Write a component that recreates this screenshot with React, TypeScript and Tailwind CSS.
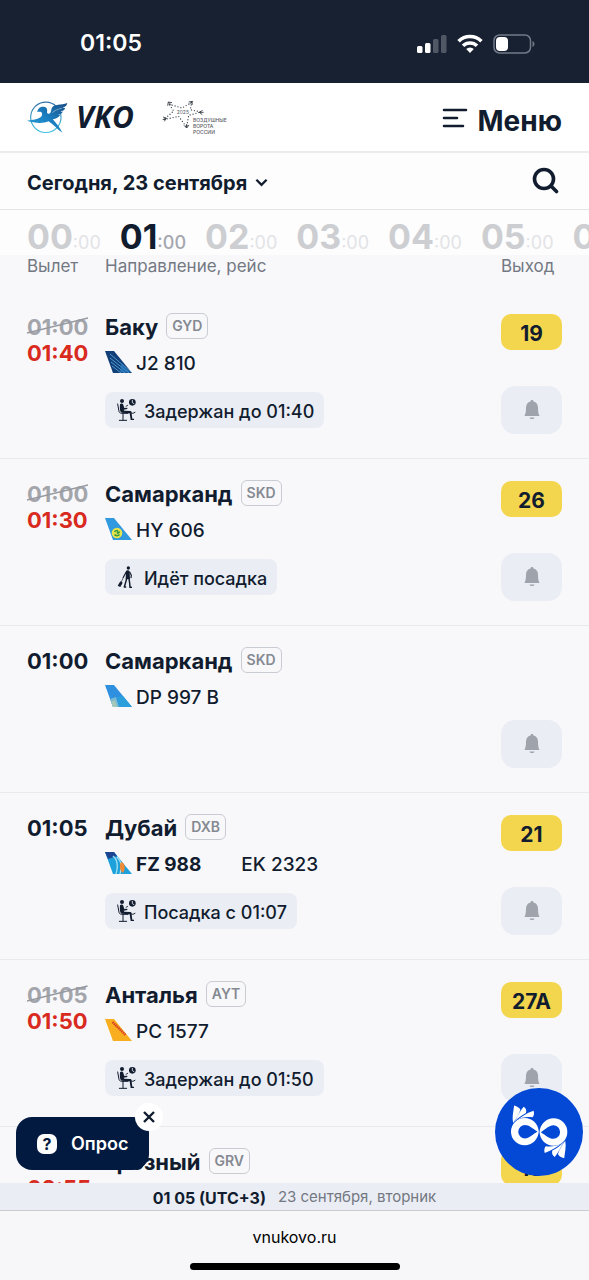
import * as React from "react"

interface Flight {
  id: number;
  time: string;
  newTime?: string;
  city: string;
  code: string;
  airline: string;
  flight: string;
  shared?: string;
  status?: string;
  boarding?: boolean;
  gate?: string;
}

const flights: Flight[] = [
  { id: 1, time: "01:00", newTime: "01:40", city: "Баку", code: "GYD", airline: "J2", flight: "J2 810", status: "Задержан до 01:40", gate: "19" },
  { id: 2, time: "01:00", newTime: "01:30", city: "Самарканд", code: "SKD", airline: "HY", flight: "HY 606", status: "Идёт посадка", boarding: true, gate: "26" },
  { id: 3, time: "01:00", city: "Самарканд", code: "SKD", airline: "DP", flight: "DP 997 B" },
  { id: 4, time: "01:05", city: "Дубай", code: "DXB", airline: "FZ", flight: "FZ 988", shared: "EK 2323", status: "Посадка с 01:07", gate: "21" },
  { id: 5, time: "01:05", newTime: "01:50", city: "Анталья", code: "AYT", airline: "PC", flight: "PC 1577", status: "Задержан до 01:50", gate: "27A" },
  { id: 6, time: "01:20", newTime: "02:55", city: "Грозный", code: "GRV", airline: "DP", flight: "DP 991", gate: "15" },
];

const hours = ["00", "01", "02", "03", "04", "05", "06"];

const StatusBar = () => (
  <div className="flex h-[83px] shrink-0 items-center justify-between bg-[#172132] pt-1 pr-[54px] pl-20 text-white">
    <span className="text-[23px] font-semibold">01:05</span>
    <div className="flex items-center gap-2.5">
      <svg width="30" height="20" viewBox="0 0 30 20" fill="currentColor">
        <rect x="0" y="12" width="5.5" height="7" rx="1.5" />
        <rect x="8" y="9" width="5.5" height="10" rx="1.5" />
        <rect x="16" y="5" width="5.5" height="14" rx="1.5" opacity="0.25" />
        <rect x="24" y="1" width="5.5" height="18" rx="1.5" opacity="0.25" />
      </svg>
      <svg width="26" height="19" viewBox="0 0 26 19" fill="none" stroke="currentColor" strokeWidth="3.6">
        <path d="M1.6 7.2a16.2 16.2 0 0 1 22.8 0" />
        <path d="M6 11.8a10 10 0 0 1 14 0" />
        <path d="M13 19l-3.8-3.9a5.4 5.4 0 0 1 7.6 0z" fill="currentColor" stroke="none" />
      </svg>
      <svg width="42" height="20" viewBox="0 0 42 20" fill="none">
        <rect x="1" y="1" width="36.5" height="18" rx="5.5" stroke="#717a87" strokeWidth="1.5" />
        <rect x="3" y="3" width="12" height="14" rx="4" fill="#fff" />
        <path d="M39.5 7v6c2.6-.8 2.6-5.2 0-6z" fill="#717a87" />
      </svg>
    </div>
  </div>
);

const BirdLogo = () => (
  <svg width="41" height="38" viewBox="0 0 124 114">
    <defs>
      <linearGradient id="ring" x1="0" y1="0" x2="0" y2="1">
        <stop offset="0" stopColor="#3571a8" />
        <stop offset="1" stopColor="#3fc4e0" />
      </linearGradient>
      <linearGradient id="bird" x1="1" y1="0" x2="0" y2="1">
        <stop offset="0" stopColor="#1b4e86" />
        <stop offset="0.5" stopColor="#1a7fc1" />
        <stop offset="1" stopColor="#2aa6dc" />
      </linearGradient>
    </defs>
    <circle cx="57" cy="58" r="46" fill="none" stroke="url(#ring)" strokeWidth="3.5" />
    <path
      d="M31 42c1-10 9-17 18-16 9 0 13 6 12 12-1 6 0 10 6 9 8-2 4-13 10-20C82 19 103 22 122 15c-2 9-7 12-14 14 3 1 5 1 8 0-3 8-8 10-15 11 3 1 5 1 8 0-4 8-9 9-15 10 3 1 4 1 7 0-5 9-12 11-23 14 9 11 20 22 29 41-15-11-28-26-42-35-19 8-43 5-65-2 18-2 32-4 42-11 5-4 5-11 1-15-4-2-8-1-12 0z"
      fill="url(#bird)"
    />
    <path d="M76 44c8-7 18-11 30-14" stroke="#fff" strokeWidth="1.2" fill="none" />
  </svg>
);

const StarLogo = () => (
  <svg width="43" height="32" viewBox="0 0 129 96">
    <path
      d="M22 13l38 11 29-17-4 22 32 7-37 10-6 36-24-33-45 10 30-26z"
      fill="none"
      stroke="#3b4048"
      strokeWidth="4"
      strokeLinecap="round"
      strokeDasharray="0 9"
    />
    <g stroke="#2a3039" strokeWidth="2.5" fill="none">
      <path d="M17 17l2-11 11 2M19 6l9 9M80 6l11-2-1 11M91 4l-9 9M122 31l-10 6 9 7M112 37h13M66 76l8 8 7-9M74 84V72M3 51l10 4-6 9M13 55L2 59" />
    </g>
    <text x="44" y="42" fontSize="15" fill="#555a63">2025</text>
  </svg>
);

const Header = () => (
  <header className="flex h-[70px] shrink-0 items-center border-b-2 border-[#ececee] bg-white px-[27px]">
    <a href="#home" className="flex items-center gap-2">
      <BirdLogo />
      <span className="font-['Open_Sans'] text-[30px] leading-8 font-bold italic">VKO</span>
    </a>
    <a href="#gates" className="ml-7 flex items-start text-[#5c6068]">
      <StarLogo />
      <span className="-ml-3 pt-[17px] text-[5px] leading-[6px] font-medium">
        ВОЗДУШНЫЕ
        <br />
        ВОРОТА
        <br />
        РОССИИ
      </span>
    </a>
    <button className="ml-auto flex items-start gap-2.5 pt-1">
      <svg width="26" height="20" viewBox="0 0 26 20" className="mt-[5px]" stroke="currentColor" strokeWidth="2.6" strokeLinecap="round">
        <path d="M2 2h22M2 10h13M2 18h19" />
      </svg>
      <span className="pt-1 text-[28px] leading-7 font-bold">Меню</span>
    </button>
  </header>
);

const DateBar = () => (
  <div className="flex h-[57px] shrink-0 items-center justify-between border-b border-[#e3e4e7] bg-[#fdfdfe] pr-[30px] pb-0.5 pl-[27px]">
    <button className="flex items-center gap-2 pt-1">
      <span className="pt-0.5 text-[20px] font-bold">Сегодня, 23 сентября</span>
      <svg width="13" height="9" viewBox="0 0 14 9" fill="none" stroke="currentColor" strokeWidth="2.5">
        <path d="M1.5 1.5L7 7l5.5-5.5" />
      </svg>
    </button>
    <button aria-label="Поиск">
      <svg width="27" height="27" viewBox="0 0 27 27" fill="none" stroke="currentColor" strokeWidth="3.6" strokeLinecap="round">
        <circle cx="12" cy="12" r="9.5" />
        <path d="M19 19l5.5 5.5" />
      </svg>
    </button>
  </div>
);

const HourStrip = () => (
  <div className="flex h-[45px] shrink-0 items-end gap-[19px] overflow-x-clip bg-[#fdfdfe] pl-[27px]">
    {hours.map((hour) => (
      <button key={hour} className="flex shrink-0 items-baseline leading-6">
        <span className={hour === "01" ? "text-[34px] font-bold text-[#111c2e]" : "text-[34px] font-bold text-[#cdced1]"}>
          {hour}
        </span>
        <span className={hour === "01" ? "text-[18px] font-medium text-[#a4a7ad]" : "text-[18px] text-[#e2e3e6]"}>:00</span>
      </button>
    ))}
  </div>
);

const TailIcon = ({ airline }: { airline: string }) => {
  const shape = "M0 0h9l18 22H8z";
  return (
    <svg width="27" height="22" viewBox="0 0 27 22">
      {airline === "J2" && (
        <>
          <path d={shape} fill="#123f78" />
          <path d="M5 3l21 18M5 7l19 15M6 11l14 11M7 15l9 7" stroke="#5fb2e6" strokeWidth="0.8" />
          <path d="M16 12l9 9.5h-10z" fill="#2f87cf" opacity="0.6" />
        </>
      )}
      {airline === "HY" && (
        <>
          <path d={shape} fill="#3199de" />
          <circle cx="12" cy="15" r="5.3" fill="#e8e44b" />
          <path d="M9.5 14c1-2 4-2 3 0s2 1 2-.5M9.5 16.5c1 1.5 4 1.5 5 0" stroke="#3c9a3f" strokeWidth="1.5" fill="none" />
        </>
      )}
      {airline === "DP" && (
        <>
          <path d={shape} fill="#2f90e0" />
          <path d="M12 12l6-1 9 11H14z" fill="#2a9fdc" />
          <path d="M5 14l6-2 3 10H8z" fill="#79b9d4" />
          <path d="M6 17l4-2 2 7H8z" fill="#a5c8b8" />
        </>
      )}
      {airline === "FZ" && (
        <>
          <path d={shape} fill="#1ea0da" />
          <path d="M0 0h9l3 4-9 3z" fill="#1b4590" />
          <path d="M8 4c5 4 5 11 3 18M12 5c5 5 5 9 3 17" stroke="#a4e0f2" strokeWidth="1.3" fill="none" />
          <path d="M16 10c4 1 5 6 2 11-3-2-4-7-2-11z" fill="#f08a34" />
        </>
      )}
      {airline === "PC" && (
        <>
          <path d={shape} fill="#f8ae1e" />
          <path d="M7.5 3l13 13" stroke="#d9412a" strokeWidth="2.4" strokeDasharray="1.5 .6" />
        </>
      )}
    </svg>
  );
};

const WaitingIcon = () => (
  <svg width="19" height="22" viewBox="0 0 57 66" fill="none" stroke="currentColor" strokeLinecap="round" strokeLinejoin="round">
    <circle cx="15" cy="6" r="6" fill="currentColor" stroke="none" />
    <path d="M9 16c4-4 9-2 10 2l3 9 9-1v4l-11 2 2 3 18 1c4 1 4 4 4 8l2 15h5v4H41l-3-20-24-2c-5-1-6-10-5-25z" fill="currentColor" stroke="none" />
    <path d="M39 40c5 4 10 4 15 0M2 15l4 22c1 4 3 5 7 6h20M18 44v19M7 64h22" strokeWidth="3" />
    <path d="M27 22l5-3" strokeWidth="2.5" />
    <circle cx="46" cy="10" r="10" fill="currentColor" stroke="none" />
    <path d="M46 4v7l5 3" stroke="#eaedf4" strokeWidth="2.5" />
  </svg>
);

const BoardingIcon = () => (
  <svg width="19" height="22" viewBox="4 0 57 66" fill="none" stroke="currentColor" strokeLinecap="round" strokeLinejoin="round">
    <circle cx="38" cy="6" r="5" fill="currentColor" stroke="none" />
    <path d="M31 15c4-4 10-2 11 3l1 21-13 1z" fill="currentColor" stroke="none" />
    <path d="M33 38l-3 11-4 14h4M40 38l2 13 1 13h4" strokeWidth="4.5" />
    <path d="M32 17l-9 17M42 18l5 10-1 7" strokeWidth="3.5" />
    <path d="M23 34l-6 14" strokeWidth="2" />
    <path d="M14 46l7 4-7 13-8-4z" fill="currentColor" stroke="none" />
  </svg>
);

const BellIcon = () => (
  <svg width="16" height="20" viewBox="0 0 16 20" fill="#9ea3ac">
    <path d="M8 0c1 0 1.500.7 1.500 1.500C12.500 2.200 14 4.500 14 7.500c0 4 .3 6 1.500 8.500H.5C1.700 13.500 2 11.500 2 7.500c0-3 1.500-5.300 4.500-6C6.500.7 7 0 8 0z" />
    <path d="M5.500 17.500h5c-.5 2-4.500 2-5 0z" />
  </svg>
);

const Time = ({ flight }: { flight: Flight }) => (
  <div className="text-[22px] leading-[26px] font-bold">
    {flight.newTime ? (
      <>
        <s className="relative block w-fit text-[#a3a5ab] no-underline">
          {flight.time}
          <svg className="absolute inset-0 h-full w-full" viewBox="0 0 62 26" preserveAspectRatio="none" stroke="#96999f" strokeWidth="1.5">
            <path d="M0 19L62 4" />
          </svg>
        </s>
        <span className="block text-[#d92a20]">{flight.newTime}</span>
      </>
    ) : (
      flight.time
    )}
  </div>
);

const FlightTable = ({ data }: { data: Flight[] }) => (
  <table className="w-full table-fixed border-separate border-spacing-0 text-left">
    <thead>
      <tr className="h-[37px] align-top text-[17px] leading-[22px] text-[#737882]">
        <th className="w-[105px] pl-[27px] font-normal">Вылет</th>
        <th className="font-normal">Направление, рейс</th>
        <th className="w-[88px] font-normal">Выход</th>
      </tr>
    </thead>
    <tbody>
      {data.map((row) => (
        <tr key={row.id} className="h-[167px] align-top">
          <td className="border-b border-[#e8eaee] pt-[22px] pl-[27px]">
            <Time flight={row} />
          </td>
          <td className="border-b border-[#e8eaee] pt-[19px]">
            <div className="flex items-center gap-2">
              <span className="pt-0.5 text-[22px] leading-7 font-bold">{row.city}</span>
              <span className="rounded-md border border-[#c9ccd2] px-[5px] text-[14px] leading-6 font-semibold text-[#858991]">{row.code}</span>
            </div>
            <div className="mt-2 flex h-[26px] items-center gap-1 text-[19px]">
              <TailIcon airline={row.airline} />
              <span className={row.shared ? "pt-1 font-bold" : "pt-1 font-medium"}>{row.flight}</span>
              {row.shared && <span className="pt-1 pl-9 font-medium">{row.shared}</span>}
            </div>
            {row.status && (
              <div className="mt-[17px] flex h-9 w-fit items-center gap-2 rounded-lg bg-[#eaedf4] pr-2.5 pl-3">
                {row.boarding ? <BoardingIcon /> : <WaitingIcon />}
                <span className="pt-0.5 text-[18px] font-medium">{row.status}</span>
              </div>
            )}
          </td>
          <td className="border-b border-[#e8eaee] pt-[22px] pr-[27px]">
            <div className="flex flex-col gap-9">
              <div className={row.gate ? "flex h-9 items-center justify-center rounded-[10px] bg-[#f3d64e] pt-1 text-[21px] font-bold" : "h-9"}>
                {row.gate}
              </div>
              <button aria-label="Уведомить" className="flex h-12 items-center justify-center rounded-[14px] bg-[#eaedf4]">
                <BellIcon />
              </button>
            </div>
          </td>
        </tr>
      ))}
    </tbody>
  </table>
);

const Survey = () => (
  <div className="absolute bottom-[13px] left-4">
    <button className="flex h-[53px] items-center gap-3.5 rounded-[16px] bg-[#021a40] px-[21px] text-[18px] font-semibold text-white">
      <span className="flex h-5 w-5 items-center justify-center rounded-[7px] bg-white text-[16px] font-bold text-[#021a40]">?</span>
      Опрос
    </button>
    <button aria-label="Закрыть" className="absolute -top-3.5 -right-3.5 flex h-7 w-7 items-center justify-center rounded-full bg-white">
      <svg width="12" height="12" viewBox="0 0 12 12" stroke="currentColor" strokeWidth="2.4">
        <path d="M1 1l10 10M11 1L1 11" />
      </svg>
    </button>
  </div>
);

const SignLanguageButton = () => (
  <button aria-label="Жестовый язык" className="absolute right-1.5 bottom-[7px] h-[88px] w-[88px] rounded-full bg-[#0349d6]">
    <svg viewBox="193 141 267 267" fill="#fff">
      <defs>
        <g id="hand">
          <path d="M326 273c-2-24-20-41-43-41a41.500 41.500 0 1 0 0 83c23 0 41-18 43-42zM284 253c13 0 23 11 38 20-15 9-25 21-38 21a20.500 20.500 0 1 1 0-41z" fillRule="evenodd" />
          <path d="M248 247c-4-17 1-35 3-53 9 2 16 7 19 13-5 14-13 27-22 40zM251 244c10-13 15-30 29-46 8 5 9 12 7 19-12 7-24 14-36 27zM257 240c13-9 31-23 53-30 3 8 1 15-3 20-18-2-34 0-50 10z" />
        </g>
      </defs>
      <use href="#hand" />
      <use href="#hand" transform="rotate(180 327 274)" />
    </svg>
  </button>
);

const App = () => {
  return (
    <div className="flex h-screen flex-col bg-[#f8f8fb] font-['Inter',sans-serif] text-[#111c2e]">
      <StatusBar />
      <Header />
      <DateBar />
      <HourStrip />
      <main className="relative min-h-0 flex-1 overflow-hidden">
        <FlightTable data={flights} />
        <Survey />
        <SignLanguageButton />
      </main>
      <div className="flex h-7 shrink-0 items-center justify-center gap-3 border-b border-[#c9ccd2] bg-[#eaedf4] pt-0.5">
        <span className="text-[16px] font-bold">01 05 (UTC+3)</span>
        <span className="text-[15px] text-[#737882]">23 сентября, вторник</span>
      </div>
      <footer className="flex h-[69px] shrink-0 flex-col items-center justify-between bg-[#f7f7f9] pt-3.5 pb-2.5">
        <a href="#site" className="text-[16px] leading-6 text-black">vnukovo.ru</a>
        <div className="h-[7px] w-[210px] rounded-full bg-black" />
      </footer>
    </div>
  );
};

export default App;
